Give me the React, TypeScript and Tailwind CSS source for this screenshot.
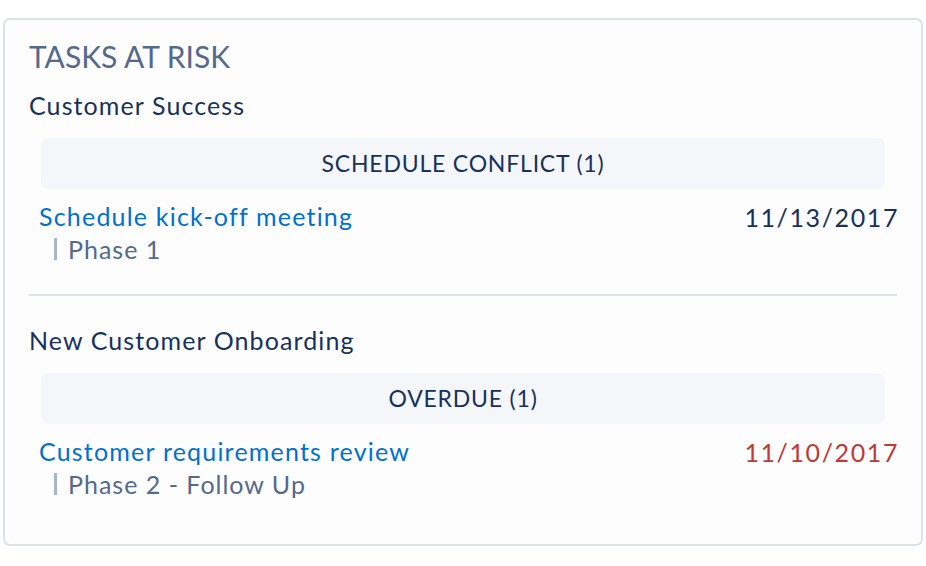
import React from "react";

type Task = {
  title: string;
  phase: string;
  date: string;
  overdue?: boolean;
};

type Group = {
  name: string;
  label: string;
  tasks: Task[];
};

const groups: Group[] = [
  {
    name: "Customer Success",
    label: "SCHEDULE CONFLICT (1)",
    tasks: [{ title: "Schedule kick-off meeting", phase: "Phase 1", date: "11/13/2017" }],
  },
  {
    name: "New Customer Onboarding",
    label: "OVERDUE (1)",
    tasks: [
      {
        title: "Customer requirements review",
        phase: "Phase 2 - Follow Up",
        date: "11/10/2017",
        overdue: true,
      },
    ],
  },
];

const TaskRow = ({ task }: { task: Task }) => {
  return (
    <div className="flex items-start justify-between pl-[10px] mt-[12px]">
      <div className="flex flex-col">
        <a href="#" className="text-[25px] leading-[30px] tracking-[1.2px] text-[#0070d2]">
          {task.title}
        </a>
        <div className="flex items-center mt-[3px] pl-[15px] text-[25px] leading-[30px] tracking-[1px] text-[#54698d]">
          <span className="w-[3px] h-[22px] bg-[#a8b7c7] mr-[11px]" />
          {task.phase}
        </div>
      </div>
      <span
        className={`text-[25px] leading-[30px] mt-[1px] tracking-[1.6px] -mr-[2px] ${
          task.overdue ? "text-[#c23934]" : "text-[#16325c]"
        }`}
      >
        {task.date}
      </span>
    </div>
  );
};

const GroupBlock = ({ group }: { group: Group }) => {
  return (
    <div>
      <h3 className="text-[25px] leading-[30px] tracking-[1.1px] text-[#16325c]">{group.name}</h3>
      {/* Status pill */}
      <div className="mx-[12px] mt-[18px] h-[51px] rounded-[8px] bg-[#f4f6f9] flex items-center justify-center text-[23px] tracking-[0.8px] text-[#16325c]">
        {group.label}
      </div>
      {group.tasks.map((t) => (
        <TaskRow key={t.title} task={t} />
      ))}
    </div>
  );
};

export default function App() {
  return (
    <div
      className="w-[926px] h-[566px] bg-white pt-[18px] pl-[3px] pr-[3px]"
      style={{ fontFamily: "Lato, 'Open Sans', sans-serif" }}
    >
      <div className="border-2 border-[#dde1ea] rounded-[7px] bg-[#fdfdfe] px-[24px] pt-[19px] pb-[45px]">
        <h2 className="text-[30px] leading-[34px] text-[#54698d]">TASKS AT RISK</h2>
        <div className="mt-[17px]">
          <GroupBlock group={groups[0]} />
        </div>
        <div className="h-[2px] bg-[#dde1ea] mt-[30px]" />
        <div className="mt-[29px]">
          <GroupBlock group={groups[1]} />
        </div>
      </div>
    </div>
  );
}
